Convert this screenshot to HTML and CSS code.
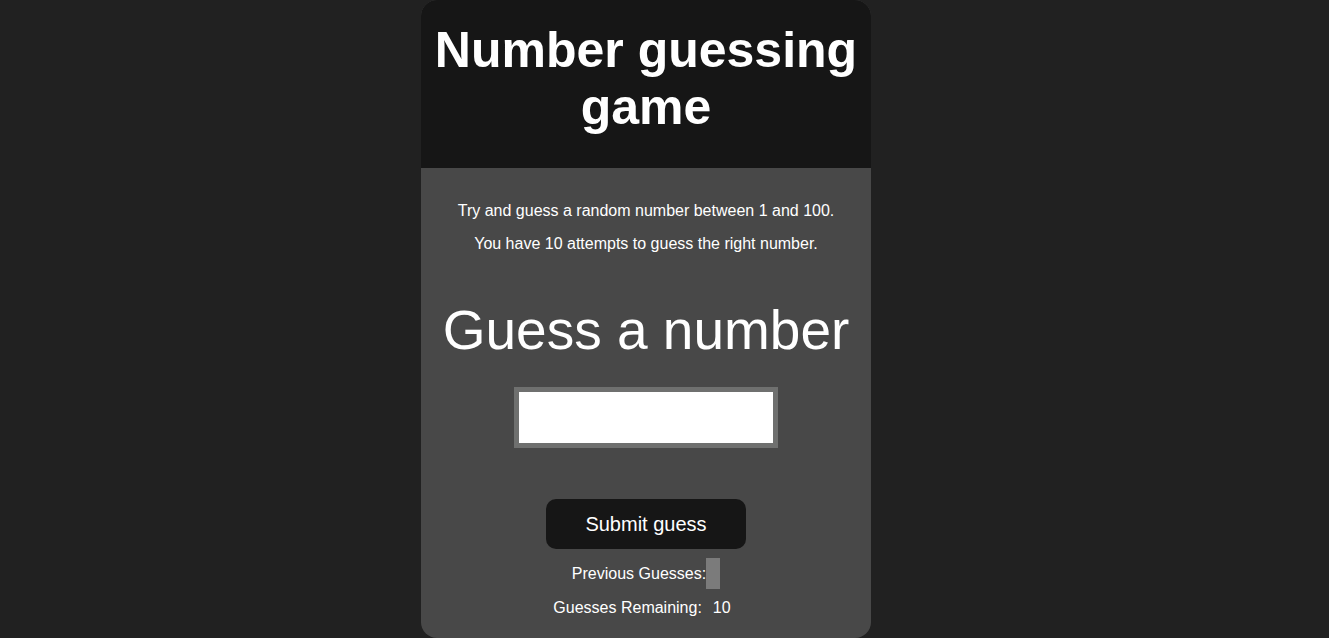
FILE: index.html
```html
<!DOCTYPE html>
<html lang="en">
<head>
<meta charset="utf-8">
<title>Number guessing game</title>
<link rel="stylesheet" href="styles.css">
</head>
<body>
<main class="card">
  <header class="card-header">
    <h1 class="title">Number guessing game</h1>
  </header>
  <section class="card-body">
    <p class="intro">Try and guess a random number between 1 and 100.</p>
    <p class="intro">You have 10 attempts to guess the right number.</p>
    <h2 class="prompt">Guess a number</h2>
    <input class="guess-input" type="text" aria-label="Guess">
    <button class="submit-btn" type="button">Submit guess</button>
    <p class="stat stat-prev">Previous Guesses:<span class="prev-box"></span></p>
    <p class="stat stat-remaining">Guesses Remaining: <span class="remaining">10</span></p>
  </section>
</main>
</body>
</html>
```

FILE: styles.css
```css
* { box-sizing: border-box; }
html, body { height: 100%; }
body {
  margin: 0;
  padding-right: 37px;
  background: #212121;
  font-family: "Liberation Sans", Arial, sans-serif;
  color: #ffffff;
  display: flex;
  justify-content: center;
}
.card {
  width: 450px;
  height: 638px;
  border-radius: 16px;
  overflow: hidden;
  background: #484848;
  display: flex;
  flex-direction: column;
}
.card-header {
  background: #161616;
  padding: 22px 6px 32px;
  text-align: center;
}
.title {
  margin: 0;
  font-size: 50px;
  line-height: 57px;
  font-weight: bold;
}
.card-body {
  flex: 1;
  display: flex;
  flex-direction: column;
  align-items: center;
  padding-top: 34px;
}
.intro {
  margin: 0 0 15px;
  font-size: 16px;
  line-height: 18px;
}
.prompt {
  margin: 30px 0 0;
  font-size: 55px;
  line-height: 64px;
  font-weight: normal;
}
.guess-input {
  margin-top: 25px;
  width: 264px;
  height: 61px;
  border: 5px solid #6f706f;
  background: #ffffff;
  outline: none;
  font-size: 20px;
}
.submit-btn {
  margin-top: 51px;
  width: 200px;
  height: 50px;
  border: none;
  border-radius: 10px;
  background: #161616;
  color: #ffffff;
  font-family: inherit;
  font-size: 20px;
  cursor: pointer;
}
.stat {
  margin: 0;
  font-size: 16px;
  line-height: 18px;
  display: flex;
  align-items: center;
}
.stat-prev {
  margin-top: 9px;
}
.stat-remaining {
  margin-top: 10px;
  padding-right: 8px;
}
.prev-box {
  display: inline-block;
  width: 14px;
  height: 31px;
  background: #7b7b7b;
}
.remaining {
  margin-left: 11px;
}
```
